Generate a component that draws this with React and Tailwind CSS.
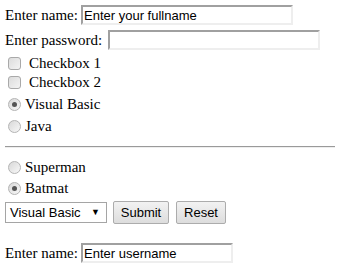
import React from 'react';

// old IE style form controls
function TextBox({ value, width }) {
  return (
    <div
      className="h-[20px] shrink-0 bg-white border-2 border-t-[#a0a0a0] border-l-[#a0a0a0] border-b-[#eeeeee] border-r-[#eeeeee] flex items-center pl-[1px] text-[13px] text-black leading-none font-['Liberation_Sans',sans-serif]"
      style={{ width }}
    >
      {value}
    </div>
  );
}

function Check() {
  return (
    <span className="inline-block shrink-0 w-[13px] h-[13px] rounded-[3px] border border-[#a9a9a9] bg-gradient-to-br from-[#dcdcdc] to-[#f4f4f4]"></span>
  );
}

function Radio({ checked }) {
  return (
    <span className="inline-flex shrink-0 items-center justify-center w-[13px] h-[13px] rounded-full border border-[#b4b4b4] bg-gradient-to-br from-[#d8d8d8] to-[#f8f8f8]">
      {checked && <span className="w-[5px] h-[5px] rounded-full bg-[#555]"></span>}
    </span>
  );
}

function Button({ children, width }) {
  return (
    <div
      className="h-[23px] shrink-0 flex items-center justify-center rounded-[2px] border border-[#acacac] bg-gradient-to-b from-[#f2f2f2] to-[#dddddd] text-[13px] text-black"
      style={{ width }}
    >
      {children}
    </div>
  );
}

export default function App() {
  return (
    <div className="w-[346px] h-[274px] bg-white text-black text-[15px] leading-none whitespace-nowrap font-['Liberation_Serif',serif] pl-[5px] pt-[5px]">
      <div className="flex items-center h-[20px]">
        <span className="w-[76px] shrink-0">Enter name:</span>
        <TextBox value="Enter your fullname" width="212px" />
      </div>

      <div className="flex items-center h-[20px] mt-[5px]">
        <span className="w-[103px] shrink-0">Enter password:</span>
        <TextBox value="" width="212px" />
      </div>

      <div className="flex items-center h-[19px] mt-[4px] pl-[3px]">
        <Check />
        <span className="ml-[8px]">Checkbox 1</span>
      </div>
      <div className="flex items-center h-[19px] pl-[3px]">
        <Check />
        <span className="ml-[8px]">Checkbox 2</span>
      </div>
      <div className="flex items-center h-[22px] mt-[1px] pl-[3px]">
        <Radio checked />
        <span className="ml-[4px]">Visual Basic</span>
      </div>
      <div className="flex items-center h-[22px] pl-[3px]">
        <Radio />
        <span className="ml-[4px]">Java</span>
      </div>

      <div className="w-[330px] mt-[9px] mb-[9px] border-t border-t-[#9a9a9a] border-b border-b-[#eeeeee]"></div>

      <div className="flex items-center h-[21px] pl-[3px]">
        <Radio />
        <span className="ml-[4px]">Superman</span>
      </div>
      <div className="flex items-center h-[20px] pl-[3px]">
        <Radio checked />
        <span className="ml-[4px]">Batmat</span>
      </div>

      <div className="flex items-center gap-[6px] mt-[3px] font-['Liberation_Sans',sans-serif]">
        <div className="w-[102px] h-[21px] shrink-0 border border-[#a5a5a5] bg-white flex items-center justify-between pl-[4px] pr-[6px] text-[13px]">
          <span>Visual Basic</span>
          <span className="text-[9px]">▼</span>
        </div>
        <Button width="56px">Submit</Button>
        <div className="ml-[1px]">
          <Button width="50px">Reset</Button>
        </div>
      </div>

      <div className="flex items-center h-[20px] mt-[19px]">
        <span className="w-[76px] shrink-0">Enter name:</span>
        <TextBox value="Enter username" width="152px" />
      </div>
    </div>
  );
}
